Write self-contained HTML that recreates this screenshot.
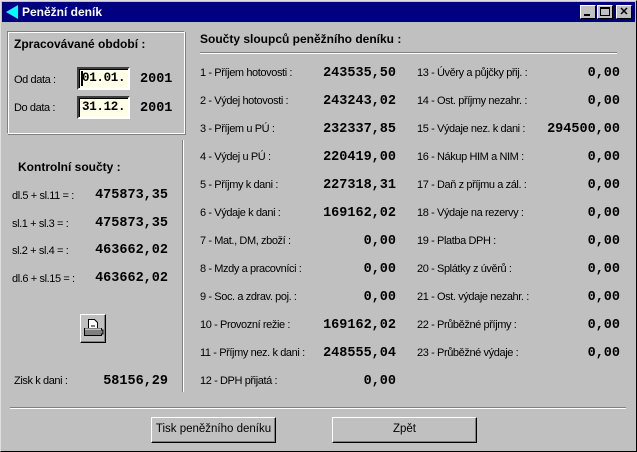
<!DOCTYPE html>
<html><head><meta charset="utf-8"><style>
*{margin:0;padding:0;box-sizing:border-box}
body{width:637px;height:452px;background:#c0c0c0;position:relative;overflow:hidden;font-family:"Liberation Sans",sans-serif;font-size:11px;color:#000}
.a{position:absolute;white-space:nowrap;line-height:14px}
.l{letter-spacing:-0.4px}
.n{font-family:"Liberation Mono",monospace;font-weight:bold;font-size:13.5px;text-align:right;margin-top:1px}
.b{font-weight:bold;font-size:12px}
.etch{position:absolute;border-top:1px solid #808080;border-bottom:1px solid #fff}
.vetch{position:absolute;border-left:1px solid #808080;border-right:1px solid #fff}
.btn{position:absolute;background:#c0c0c0;border:1px solid;border-color:#fff #000 #000 #fff;box-shadow:inset -1px -1px 0 #808080;text-align:center;font-size:11.5px;line-height:22px}
.inp{position:absolute;background:#ffffe8;border:2px solid;border-color:#404040 #fff #fff #404040;box-shadow:inset 1px 1px 0 #000;font-family:"Liberation Mono",monospace;font-weight:bold;font-size:12.5px;letter-spacing:-0.3px;line-height:18px;padding-left:3px;overflow:hidden}
.wb{position:absolute;top:5px;width:16px;height:14px;background:#c0c0c0;border:1px solid;border-color:#fff #000 #000 #fff;font-size:11px;font-weight:bold;text-align:center;line-height:12px}
</style></head><body>
<div style="position:absolute;left:0;top:0;width:637px;height:452px;border:1px solid;border-color:#dfdfdf #000 #000 #dfdfdf"></div>
<div style="position:absolute;left:2px;top:2px;width:633px;height:20px;background:#000080"></div>
<svg style="position:absolute;left:5px;top:5px" width="14" height="14"><polygon points="13,0 13,14 1,7" fill="#00ffff"/></svg>
<div class="a" style="left:22px;top:5px;color:#fff;font-weight:bold;font-size:12px">Peněžní deník</div>
<div class="wb" style="left:580px"><div style="position:absolute;left:3px;top:8px;width:6px;height:2px;background:#000"></div></div>
<div class="wb" style="left:597px"><div style="position:absolute;left:2px;top:1px;width:10px;height:9px;border:1px solid #000;border-top-width:2px"></div></div>
<div class="wb" style="left:616px">✕</div>

<div style="position:absolute;left:7px;top:31px;width:178px;height:103px;border:1px solid;border-color:#808080 #fff #fff #808080;box-shadow:inset 1px 1px 0 #fff,1px 1px 0 #808080"></div>
<div class="a b" style="left:14px;top:37px">Zpracovávané období :</div>
<div class="a l" style="left:14px;top:73px">Od data :</div>
<div class="a l" style="left:14px;top:101px">Do data :</div>
<div class="inp" style="left:77px;top:67px;width:53px;height:23px">01.01.</div>
<div style="position:absolute;left:81px;top:71px;width:2px;height:15px;background:#000"></div>
<div class="inp" style="left:77px;top:96px;width:53px;height:23px">31.12.</div>
<div class="a n" style="left:140px;top:72px">2001</div>
<div class="a n" style="left:140px;top:101px">2001</div>

<div class="vetch" style="left:182px;top:140px;height:252px"></div>

<div class="a b" style="left:18px;top:160px">Kontrolní součty :</div>
<div class="a l" style="left:12px;top:189px">dl.5 + sl.11 = :</div>
<div class="a l" style="left:12px;top:217px">sl.1 + sl.3 = :</div>
<div class="a l" style="left:12px;top:244px">sl.2 + sl.4 = :</div>
<div class="a l" style="left:12px;top:272px">dl.6 + sl.15 = :</div>
<div class="a n" style="left:60px;width:108px;top:188px">475873,35</div>
<div class="a n" style="left:60px;width:108px;top:216px">475873,35</div>
<div class="a n" style="left:60px;width:108px;top:243px">463662,02</div>
<div class="a n" style="left:60px;width:108px;top:271px">463662,02</div>

<div style="position:absolute;left:80px;top:314px;width:26px;height:29px;background:#c0c0c0;border:1px solid;border-color:#fff #000 #000 #fff;box-shadow:inset -1px -1px 0 #808080"></div>
<svg style="position:absolute;left:82px;top:318px" width="22" height="22"><path d="M6.5 1.5h6l3 3v8h-9z" fill="#fff" stroke="#000"/><path d="M9 8h4" stroke="#000"/><path d="M2.5 10.5h17v7h-17z" fill="#808080" stroke="#000"/><path d="M3 11h16" stroke="#fff"/><path d="M19 12h2v4h-2" fill="#808080" stroke="#000"/></svg>

<div class="a l" style="left:14px;top:374px">Zisk k dani :</div>
<div class="a n" style="left:60px;width:108px;top:374px">58156,29</div>

<div class="a b" style="left:200px;top:32px">Součty sloupců peněžního deníku :</div>
<div class="etch" style="left:200px;top:52px;width:417px"></div>

<div class="a l" style="left:200px;top:66px">1 - Příjem hotovosti :</div><div class="a n" style="left:300px;width:96px;top:66px">243535,50</div>
<div class="a l" style="left:200px;top:94px">2 - Výdej hotovosti :</div><div class="a n" style="left:300px;width:96px;top:94px">243243,02</div>
<div class="a l" style="left:200px;top:122px">3 - Příjem u PÚ :</div><div class="a n" style="left:300px;width:96px;top:122px">232337,85</div>
<div class="a l" style="left:200px;top:150px">4 - Výdej u PÚ :</div><div class="a n" style="left:300px;width:96px;top:150px">220419,00</div>
<div class="a l" style="left:200px;top:178px">5 - Příjmy k dani :</div><div class="a n" style="left:300px;width:96px;top:178px">227318,31</div>
<div class="a l" style="left:200px;top:206px">6 - Výdaje k dani :</div><div class="a n" style="left:300px;width:96px;top:206px">169162,02</div>
<div class="a l" style="left:200px;top:234px">7 - Mat., DM, zboží :</div><div class="a n" style="left:300px;width:96px;top:234px">0,00</div>
<div class="a l" style="left:200px;top:262px">8 - Mzdy a pracovníci :</div><div class="a n" style="left:300px;width:96px;top:262px">0,00</div>
<div class="a l" style="left:200px;top:290px">9 - Soc. a zdrav. poj. :</div><div class="a n" style="left:300px;width:96px;top:290px">0,00</div>
<div class="a l" style="left:200px;top:318px">10 - Provozní režie :</div><div class="a n" style="left:300px;width:96px;top:318px">169162,02</div>
<div class="a l" style="left:200px;top:346px">11 - Příjmy nez. k dani :</div><div class="a n" style="left:300px;width:96px;top:346px">248555,04</div>
<div class="a l" style="left:200px;top:374px">12 - DPH přijatá :</div><div class="a n" style="left:300px;width:96px;top:374px">0,00</div>

<div class="a l" style="left:417px;top:66px">13 - Úvěry a půjčky přij. :</div><div class="a n" style="left:520px;width:100px;top:66px">0,00</div>
<div class="a l" style="left:417px;top:94px">14 - Ost. příjmy nezahr. :</div><div class="a n" style="left:520px;width:100px;top:94px">0,00</div>
<div class="a l" style="left:417px;top:122px">15 - Výdaje nez. k dani :</div><div class="a n" style="left:520px;width:100px;top:122px">294500,00</div>
<div class="a l" style="left:417px;top:150px">16 - Nákup HIM a NIM :</div><div class="a n" style="left:520px;width:100px;top:150px">0,00</div>
<div class="a l" style="left:417px;top:178px">17 - Daň z příjmu a zál. :</div><div class="a n" style="left:520px;width:100px;top:178px">0,00</div>
<div class="a l" style="left:417px;top:206px">18 - Výdaje na rezervy :</div><div class="a n" style="left:520px;width:100px;top:206px">0,00</div>
<div class="a l" style="left:417px;top:234px">19 - Platba DPH :</div><div class="a n" style="left:520px;width:100px;top:234px">0,00</div>
<div class="a l" style="left:417px;top:262px">20 - Splátky z úvěrů :</div><div class="a n" style="left:520px;width:100px;top:262px">0,00</div>
<div class="a l" style="left:417px;top:290px">21 - Ost. výdaje nezahr. :</div><div class="a n" style="left:520px;width:100px;top:290px">0,00</div>
<div class="a l" style="left:417px;top:318px">22 - Průběžné příjmy :</div><div class="a n" style="left:520px;width:100px;top:318px">0,00</div>
<div class="a l" style="left:417px;top:346px">23 - Průběžné výdaje :</div><div class="a n" style="left:520px;width:100px;top:346px">0,00</div>

<div class="etch" style="left:10px;top:407px;width:616px"></div>
<div class="btn" style="left:151px;top:417px;width:125px;height:26px">Tisk peněžního deníku</div>
<div class="btn" style="left:332px;top:417px;width:145px;height:26px">Zpět</div>
</body></html>
